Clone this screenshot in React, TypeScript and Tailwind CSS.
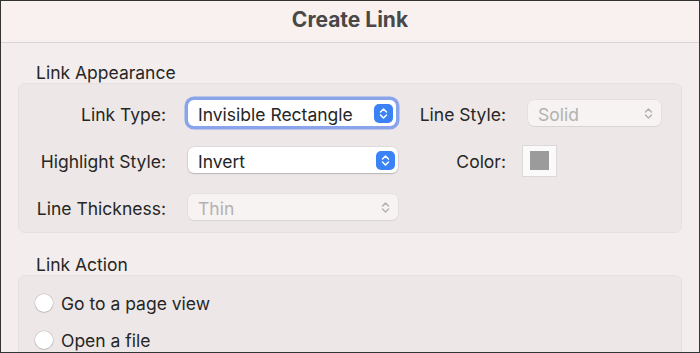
import React from "react";

const Chevrons = ({ color }: { color: string }) => (
  <svg width="9" height="13" viewBox="0 0 9 13" fill="none">
    <path d="M1.5 5 L4.5 2 L7.5 5" stroke={color} strokeWidth="1.5" strokeLinecap="round" strokeLinejoin="round" />
    <path d="M1.5 8 L4.5 11 L7.5 8" stroke={color} strokeWidth="1.5" strokeLinecap="round" strokeLinejoin="round" />
  </svg>
);

const Popup = ({
  text,
  width,
  disabled,
  focused,
}: {
  text: string;
  width: string;
  disabled?: boolean;
  focused?: boolean;
}) => (
  <div
    className={
      (disabled
        ? "bg-[#f6f3f2] text-[#b4b1b0] shadow-[0_0_0_0.5px_rgba(0,0,0,0.06),0_1px_1px_rgba(0,0,0,0.06)] "
        : "bg-white text-[#262626] shadow-[0_0_0_0.5px_rgba(0,0,0,0.12),0_1px_1.5px_rgba(0,0,0,0.18)] ") +
      (focused ? "!shadow-[0_0_0_3.5px_rgba(120,152,235,0.85)] " : "") +
      "h-[26px] rounded-[6px] flex items-center justify-between pl-[10px] pr-[3px] " +
      width
    }
  >
    <span className="text-[17.5px] leading-none pt-[3px]">{text}</span>
    {disabled ? (
      <div className="w-[19px] h-[19px] flex items-center justify-center">
        <Chevrons color="#b4b1b0" />
      </div>
    ) : (
      <div className="w-[19px] h-[19px] rounded-[5px] bg-[#3a82f6] flex items-center justify-center">
        <Chevrons color="#ffffff" />
      </div>
    )}
  </div>
);

const Label = ({ children, width }: { children: React.ReactNode; width: string }) => (
  <div className={"text-right text-[17.5px] text-[#262626] leading-none whitespace-nowrap pt-[4px] " + width}>
    {children}
  </div>
);

const Radio = ({ label }: { label: string }) => (
  <div className="flex items-center h-[18px]">
    <div className="w-[18px] h-[18px] rounded-full bg-white shadow-[0_0_0_0.5px_rgba(0,0,0,0.15),0_0.5px_1.5px_rgba(0,0,0,0.2)]" />
    <span className="ml-[8px] text-[17.5px] text-[#262626] leading-none pt-[2px]">{label}</span>
  </div>
);

export default function App() {
  return (
    <div
      className="w-[700px] h-[353px] border border-[#333333] overflow-hidden bg-[#f3eeed] flex flex-col"
      style={{ fontFamily: 'Inter, "Noto Sans", sans-serif' }}
    >
      <div className="h-[42px] shrink-0 bg-[#f8f1ef] border-b border-[#dad4d2] flex items-center justify-center">
        <span className="text-[21px] font-bold text-[#4a4747] mt-[-4px] leading-none">Create Link</span>
      </div>

      <div className="px-[17px]">
        <div className="h-[20px] mt-[19px] flex items-center pl-[18px] pt-[2px] text-[17.5px] text-[#262626]">
          Link Appearance
        </div>
        <div className="mt-[1px] h-[150px] rounded-[7px] bg-[#ede8e7] border border-[#e6e1e0] pt-[16px] flex flex-col gap-[21px]">
          <div className="flex items-center h-[26px]">
            <Label width="w-[147px]">Link Type:</Label>
            <div className="w-[22px]" />
            <Popup text="Invisible Rectangle" width="w-[208px]" focused />
            <Label width="w-[110px]">Line Style:</Label>
            <div className="w-[22px]" />
            <Popup text="Solid" width="w-[133px]" disabled />
          </div>
          <div className="flex items-center h-[26px]">
            <Label width="w-[147px]">Highlight Style:</Label>
            <div className="w-[22px]" />
            <Popup text="Invert" width="w-[210px]" />
            <Label width="w-[108px]">Color:</Label>
            <div className="w-[16px]" />
            <div className="w-[35px] h-[32px] mt-[1px] bg-[#fbfafa] border border-[#dcd8d7] flex items-center justify-center">
              <div className="w-[19px] h-[19px] bg-[#9b9b9b]" />
            </div>
          </div>
          <div className="flex items-center h-[26px]">
            <Label width="w-[147px]">Line Thickness:</Label>
            <div className="w-[22px]" />
            <Popup text="Thin" width="w-[210px]" disabled />
          </div>
        </div>

        <div className="h-[20px] mt-[21px] flex items-center pl-[18px] pt-[2px] text-[17.5px] text-[#262626]">
          Link Action
        </div>
        <div className="mt-[1px] h-[120px] rounded-[7px] bg-[#ede8e7] border border-[#e6e1e0] pt-[18px] pl-[16px] flex flex-col gap-[19px]">
          <Radio label="Go to a page view" />
          <Radio label="Open a file" />
        </div>
      </div>
    </div>
  );
}
